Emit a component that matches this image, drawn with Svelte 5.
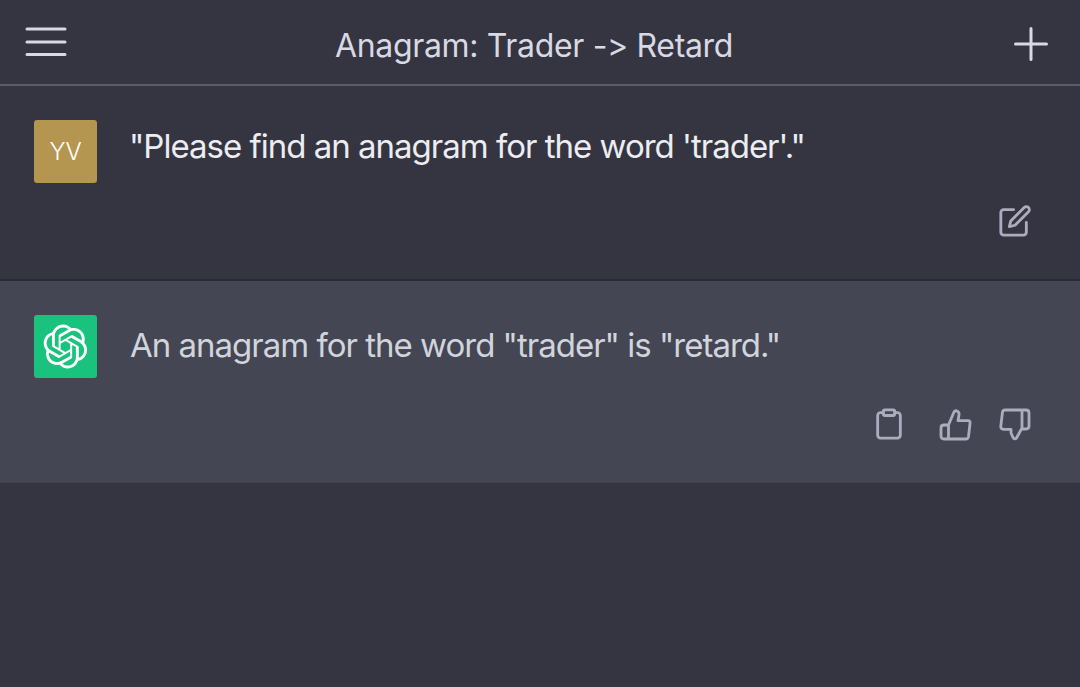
<script>
	const logo =
		'M37.5324 16.8707C37.9808 15.5241 38.1363 14.0974 37.9886 12.6859C37.8409 11.2744 37.3934 9.91076 36.676 8.68622C35.6126 6.83404 33.9882 5.3676 32.0373 4.4985C30.0864 3.62941 27.9098 3.40259 25.8215 3.85078C24.8796 2.7893 23.7219 1.94125 22.4257 1.36341C21.1295 0.785575 19.7249 0.491269 18.3058 0.500197C16.1708 0.495044 14.0893 1.16803 12.3614 2.42214C10.6335 3.67624 9.34853 5.44666 8.6917 7.47815C7.30085 7.76286 5.98686 8.3414 4.8377 9.17505C3.68854 10.0087 2.73073 11.0782 2.02839 12.312C0.956464 14.1591 0.498905 16.2988 0.721698 18.4228C0.944492 20.5467 1.83612 22.5449 3.268 24.1293C2.81966 25.4759 2.66413 26.9026 2.81182 28.3141C2.95951 29.7256 3.40701 31.0892 4.12437 32.3138C5.18791 34.1659 6.8123 35.6322 8.76321 36.5013C10.7141 37.3704 12.8907 37.5973 14.9789 37.1492C15.9208 38.2107 17.0786 39.0587 18.3747 39.6366C19.6709 40.2144 21.0755 40.5087 22.4946 40.4998C24.6307 40.5054 26.7133 39.8321 28.4418 38.5772C30.1704 37.3223 31.4556 35.5506 32.1119 33.5179C33.5027 33.2332 34.8167 32.6547 35.9659 31.821C37.115 30.9874 38.0728 29.9178 38.7752 28.684C39.8458 26.8371 40.3023 24.6979 40.0789 22.5748C39.8556 20.4517 38.9639 18.4544 37.5324 16.8707ZM22.4978 37.8849C20.7443 37.8874 19.0459 37.2733 17.6994 36.1501C17.7601 36.117 17.8666 36.0586 17.936 36.0161L25.9004 31.4156C26.1003 31.3019 26.2663 31.137 26.3813 30.9378C26.4964 30.7386 26.5563 30.5124 26.5549 30.2825V19.0542L29.9213 20.998C29.9389 21.0068 29.9541 21.0198 29.9656 21.0359C29.977 21.052 29.9842 21.0707 29.9867 21.0902V30.3889C29.9842 32.375 29.1946 34.2791 27.7909 35.6841C26.3872 37.0892 24.4838 37.8806 22.4978 37.8849ZM6.39227 31.0064C5.51397 29.4888 5.19742 27.7107 5.49804 25.9832C5.55718 26.0187 5.66048 26.0818 5.73461 26.1244L13.699 30.7248C13.8975 30.8408 14.1233 30.902 14.3532 30.902C14.583 30.902 14.8088 30.8408 15.0073 30.7248L24.731 25.1103V28.9979C24.7321 29.0177 24.7283 29.0376 24.7199 29.0556C24.7115 29.0736 24.6988 29.0893 24.6829 29.1012L16.6317 33.7497C14.9096 34.7416 12.8643 35.0097 10.9447 34.4954C9.02506 33.9811 7.38785 32.7263 6.39227 31.0064ZM4.29707 13.6194C5.17156 12.0998 6.55279 10.9364 8.19885 10.3327C8.19885 10.4013 8.19491 10.5228 8.19491 10.6071V19.808C8.19351 20.0378 8.25334 20.2638 8.36823 20.4629C8.48312 20.6619 8.64893 20.8267 8.84863 20.9404L18.5723 26.5542L15.206 28.4979C15.1894 28.5089 15.1703 28.5155 15.1505 28.5173C15.1307 28.5191 15.1107 28.516 15.0924 28.5082L7.04046 23.8557C5.32135 22.8601 4.06716 21.2235 3.55289 19.3046C3.03862 17.3858 3.30624 15.3413 4.29707 13.6194ZM31.955 20.0556L22.2312 14.4411L25.5976 12.4981C25.6142 12.4872 25.6333 12.4805 25.6531 12.4787C25.6729 12.4769 25.6928 12.4801 25.7111 12.4879L33.7631 17.1364C34.9967 17.849 36.0017 18.8982 36.6606 20.1613C37.3194 21.4244 37.6047 22.849 37.4832 24.2684C37.3617 25.6878 36.8382 27.0432 35.9743 28.1759C35.1103 29.3086 33.9415 30.1717 32.6047 30.6641C32.6047 30.5947 32.6047 30.4733 32.6047 30.3889V21.188C32.6066 20.9586 32.5474 20.7328 32.4332 20.5338C32.319 20.3348 32.154 20.1698 31.955 20.0556ZM35.3055 15.0128C35.2464 14.9765 35.1431 14.9142 35.069 14.8717L27.1045 10.2712C26.906 10.1554 26.6803 10.0943 26.4504 10.0943C26.2206 10.0943 25.9948 10.1554 25.7963 10.2712L16.0726 15.8858V11.9982C16.0715 11.9783 16.0753 11.9585 16.0837 11.9405C16.0921 11.9225 16.1048 11.9068 16.1207 11.8949L24.1719 7.25025C25.4053 6.53903 26.8158 6.19376 28.2383 6.25482C29.6608 6.31589 31.0364 6.78077 32.2044 7.59508C33.3723 8.40939 34.2842 9.53945 34.8334 10.8531C35.3826 12.1667 35.5464 13.6095 35.3055 15.0128ZM14.2424 21.9419L10.8752 19.9981C10.8576 19.9893 10.8423 19.9763 10.8309 19.9602C10.8195 19.9441 10.8122 19.9254 10.8098 19.9058V10.6071C10.8107 9.18295 11.2173 7.78848 11.9819 6.58696C12.7466 5.38544 13.8377 4.42659 15.1275 3.82264C16.4173 3.21869 17.8524 2.99464 19.2649 3.1767C20.6775 3.35876 22.0089 3.93941 23.1034 4.85067C23.0427 4.88379 22.937 4.94215 22.8668 4.98473L14.9024 9.58517C14.7025 9.69878 14.5366 9.86356 14.4215 10.0626C14.3065 10.2616 14.2466 10.4877 14.2479 10.7175L14.2424 21.9419ZM16.071 17.9991L20.4018 15.4978L24.7325 17.9975V22.9985L20.4018 25.4983L16.071 22.9985V17.9991Z';
</script>

<div class="page">
	<header class="topbar">
		<button class="icon-btn menu" aria-label="Open sidebar">
			<svg width="42" height="32" viewBox="0 0 42 32" fill="none" stroke="currentColor" stroke-width="3" stroke-linecap="round">
				<path d="M2 2h38M2 15h38M2 27.500h38" />
			</svg>
		</button>
		<h1 class="title">Anagram: Trader -&gt; Retard</h1>
		<button class="icon-btn" aria-label="New chat">
			<svg width="34" height="34" viewBox="0 0 34 34" fill="none" stroke="currentColor" stroke-width="3" stroke-linecap="round">
				<path d="M17 1.500v31M1.500 17h31" />
			</svg>
		</button>
	</header>

	<section class="message user">
		<div class="avatar yv">YV</div>
		<p class="text">"Please find an anagram for the word 'trader'."</p>
		<div class="actions">
			<svg width="34" height="34" viewBox="0 0 24 24" fill="none" stroke="currentColor" stroke-width="2" stroke-linecap="round" stroke-linejoin="round">
				<path d="M11 4H4a2 2 0 0 0-2 2v14a2 2 0 0 0 2 2h14a2 2 0 0 0 2-2v-7" />
				<path d="M18.500 2.500a2.120 2.120 0 0 1 3 3L12 15l-4 1 1-4 9.500-9.500z" />
			</svg>
		</div>
	</section>

	<section class="message bot">
		<div class="avatar gpt">
			<svg width="45" height="45" viewBox="0 0 41 41" fill="#fff"><path d={logo} /></svg>
		</div>
		<p class="text">An anagram for the word "trader" is "retard."</p>
		<div class="actions">
			<svg class="copy" width="34" height="34" viewBox="0 0 24 24" fill="none" stroke="currentColor" stroke-width="2" stroke-linecap="round" stroke-linejoin="round">
				<path d="M16 4h2a2 2 0 0 1 2 2v14a2 2 0 0 1-2 2H6a2 2 0 0 1-2-2V6a2 2 0 0 1 2-2h2" />
				<rect x="8" y="2" width="8" height="4" rx="1" />
			</svg>
			<svg width="34" height="34" viewBox="0 0 34 34" fill="none" stroke="currentColor" stroke-width="2.800" stroke-linecap="round" stroke-linejoin="round">
				<path d="M9.500 18L15 5Q16 3 18 4Q20.500 5 20 8L19 13.700H29Q31.500 13.700 31 16.500L29.500 29.500Q29 32 27 32H5Q2 32 2 29V21Q2 18 5 18H9.500V32" />
			</svg>
			<svg width="34" height="34" viewBox="0 0 34 34" fill="none" stroke="currentColor" stroke-width="2.800" stroke-linecap="round" stroke-linejoin="round">
				<path d="M24 3H7Q5 3 4.500 5L2.800 19Q2.500 22.300 6 22.300H13V26L15 30.500Q16.500 33 18.500 31L24 21V3H28Q31 3 31 6V19Q31 22 28 22H24" />
			</svg>
		</div>
	</section>
</div>

<style>
	:global(body) {
		background: #343541;
	}

	.page {
		width: 1080px;
		height: 687px;
		overflow: hidden;
		background: #343541;
		font-family: Inter, 'Liberation Sans', sans-serif;
		font-feature-settings: 'calt' 0;
	}

	.topbar {
		box-sizing: border-box;
		height: 86px;
		padding: 3px 32px 0 25px;
		border-bottom: 2px solid #5c5d68;
		display: flex;
		align-items: center;
		justify-content: space-between;
		color: #d9d9e3;
	}

	.icon-btn {
		display: flex;
		padding: 0;
		background: none;
		border: none;
		color: inherit;
	}

	.menu {
		margin-bottom: 2px;
	}

	.title {
		margin: 0 0 0 -13px;
		padding-top: 3px;
		font-size: 32px;
		font-weight: 400;
		letter-spacing: -0.33px;
		color: #d9d9e3;
	}

	.message {
		display: grid;
		grid-template-columns: 63px 1fr;
		grid-template-rows: 63px auto;
		align-content: start;
		column-gap: 33px;
		padding: 34px 48px 0 34px;
		box-sizing: border-box;
	}

	.user {
		height: 195px;
		border-bottom: 2px solid #2a2b32;
		color: #ececf1;
	}

	.bot {
		height: 202px;
		background: #444654;
		border-bottom: 1px solid #3f414d;
		color: #d1d5db;
	}

	.avatar {
		width: 63px;
		height: 63px;
		border-radius: 3px;
		display: flex;
		align-items: center;
		justify-content: center;
	}

	.yv {
		background: #b59651;
		color: #fff;
		font-size: 24px;
		font-weight: 300;
	}

	.gpt {
		background: #19c37d;
	}

	.text {
		margin: 0;
		font-size: 33px;
		line-height: 52px;
		letter-spacing: -1px;
	}

	.user .text {
		margin-left: -1px;
	}

	.bot .text {
		padding-top: 4px;
	}

	.actions {
		grid-column: 2;
		display: flex;
		justify-content: flex-end;
		gap: 25px;
		color: #acacbe;
	}

	.user .actions {
		margin-top: 21px;
	}

	.bot .actions {
		margin-top: 29px;
	}

	.copy {
		margin-right: 8px;
	}
</style>
